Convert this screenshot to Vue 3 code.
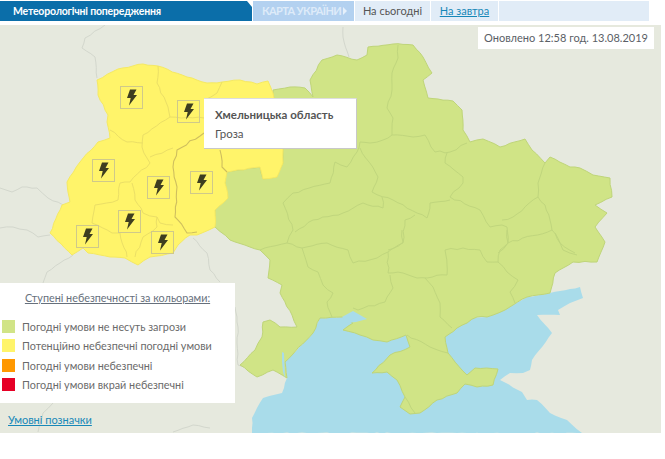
<script setup>
const bolts = [[120,86],[177,100],[92,159],[147,176],[190,171],[118,210],[76,225],[151,231]]
const legend = [
  { color: '#d1e487', label: 'Погодні умови не несуть загрози' },
  { color: '#fff46a', label: 'Потенційно небезпечні погодні умови' },
  { color: '#ff9800', label: 'Погодні умови небезпечні' },
  { color: '#e60026', label: 'Погодні умови вкрай небезпечні' },
]

// Adds small, repeatable wobble to long straight runs so that borders read as natural.
function rough(points, closed = false, amp = 1) {
  const pts = points.trim().split(/\s+/).map(p => p.split(',').map(Number))
  const out = []
  const count = closed ? pts.length : pts.length - 1
  for (let i = 0; i < count; i++) {
    const a = pts[i]
    const b = pts[(i + 1) % pts.length]
    out.push(a)
    const len = Math.hypot(b[0] - a[0], b[1] - a[1])
    const n = Math.floor(len / 5)
    for (let k = 1; k < n; k++) {
      const t = k / n
      const h = Math.sin((a[0] + k) * 12.9898 + (a[1] + k) * 78.233) * 43758.5453
      const r = (h - Math.floor(h) - 0.5) * 2 * amp
      const nx = -(b[1] - a[1]) / len
      const ny = (b[0] - a[0]) / len
      out.push([+(a[0] + (b[0] - a[0]) * t + nx * r).toFixed(1), +(a[1] + (b[1] - a[1]) * t + ny * r).toFixed(1)])
    }
  }
  if (!closed) out.push(pts[pts.length - 1])
  return out.map(p => p.join(',')).join(' ')
}

const sea = rough('252,433 252,418 263,398 282,393 287,378 285,362 313,333 320,318 342,317 360,310 440,320 487,317 513,305 527,297 550,293 580,287 583,298 570,303 558,310 560,315 537,315 552,333 532,360 530,370 523,373 510,373 500,380 522,392 527,400 537,400 550,413 567,420 582,433', true, 0.5)
const inlets = ['282,352 284,353 285,378 283,372 282,362', '342,317 353,311 367,319 356,322 346,323', '448,337 455,334 452,339 447,341']
const green = rough('228,198 225,183 227,172 260,167 263,179 277,177 283,163 283,150 273,90 290,87 305,88 313,97 310,80 322,60 337,55 357,60 367,55 368,47 393,44 413,45 423,57 432,73 423,80 428,98 453,101 462,110 463,130 470,142 483,139 500,147 525,139 532,150 545,163 550,157 570,167 580,168 593,175 610,178 612,197 595,205 607,213 595,227 605,242 597,262 573,262 555,273 550,293 527,297 513,305 505,310 487,317 477,317 457,328 445,337 448,353 467,375 475,368 498,369 493,385 477,387 465,384 457,393 437,400 420,413 410,414 400,407 405,397 397,380 387,372 372,373 390,355 410,347 406,335 387,342 373,340 360,335 343,330 353,323 342,317 320,318 313,333 285,362 287,378 273,370 257,377 240,365 255,350 262,337 263,322 270,320 280,327 297,327 292,315 280,293 282,285 268,278 270,260 260,250 230,240 215,227 215,210', true, 0.6)
const yellow = rough('97,80 118,69 143,64 158,66 187,77 207,83 222,82 240,80 257,84 268,81 273,93 283,150 283,163 277,177 263,179 260,167 227,172 225,183 228,198 215,210 215,227 197,235 190,235 178,245 173,253 150,257 138,265 125,258 110,257 88,253 83,248 72,255 50,233 62,205 70,202 67,182 80,162 98,142 110,138 107,122 108,115 98,95', true, 0.6)
const greenLines = [
  '398,45 398,58 392,73 392,90 387,108 393,118 392,135 383,140 370,143 360,142 357,152 347,167 335,162 330,183 293,193 283,203 293,230 287,243',
  '392,135 413,137 425,135 435,152 450,152 467,143',
  '447,153 445,163 463,177 463,183 450,197 480,210 490,227 502,225 507,227 508,243 498,253',
  '545,163 538,183 538,197 513,217 502,220',
  '538,197 545,205 550,220 552,230 560,243 575,253',
  '360,148 378,177 372,192 393,200 427,218 430,203 450,200',
  '382,197 383,208 363,203 343,213 313,220 295,232',
  '415,215 405,220 403,243 388,250',
  '260,250 287,243 302,248 327,243 348,250 353,263 377,258 388,252 403,242 402,230',
  '302,248 308,267 318,272 323,285 333,293 327,302 332,317',
  '390,275 393,288 385,302 358,310 353,308',
  '388,252 388,273 403,273 417,278 447,275 445,250 463,248 480,250 487,262 498,262 500,250 508,243 507,230',
  '425,278 433,287 440,303 440,317 452,328',
  '498,262 507,272 518,280 510,292 515,303',
  '555,233 563,250 577,255',
  '508,243 552,230',
  '407,335 430,347 448,353',
  '405,397 415,413',
].map(l => rough(l))
const yellowLines = [
  '158,66 157,83 168,107 170,117 143,135 142,147 150,163 130,182 120,183 118,200 95,205 92,223 112,233 120,233 127,257',
  '110,130 127,142 143,143',
  '150,157 173,148',
  '132,183 135,200 143,213 157,217 160,223 173,225',
  '157,217 157,227 143,237 135,257',
  '170,117 204,118',
  '222,82 217,93 204,100',
].map(l => rough(l))
const highlightLines = [
  '204,133 177,150 173,167 177,187 175,217 187,233 197,232',
  '220,150 222,167 227,172',
].map(l => rough(l))
const bgLines = [
  '105,25 85,38 82,48 95,57 97,78',
  '343,27 343,37 349,57',
  '0,188 12,192 22,187 37,188 48,198 63,205',
  '0,228 13,227 27,230 38,237 50,235',
  '73,255 60,263 47,272 43,283',
  '193,238 207,253 210,270 220,282',
  '235,307 238,327 237,343 238,365 244,367',
  '173,432 193,425 210,428',
  '53,403 43,413 38,432',
].map(l => rough(l, false, 0.6))
</script>

<template>
  <div class="page">
    <nav class="tabs">
      <div class="tab-main">Метеорологічні попередження</div>
      <div class="tab-map">КАРТА УКРАЇНИ<span class="arrow"></span></div>
      <div class="tab-day">На сьогодні</div>
      <a class="tab-day tab-link">На завтра</a>
      <div class="tab-fill"></div>
    </nav>
    <section class="map">
      <svg class="map-svg" viewBox="0 25 661 408" width="661" height="408">
        <polygon :points="sea" fill="#a9dcea" />
        <polyline v-for="l in bgLines" :key="l" :points="l" class="bg-line" />
        <polygon :points="green" fill="#d0e486" stroke="#bfd579" stroke-width="1" stroke-linejoin="round" />
        <polyline v-for="l in greenLines" :key="l" :points="l" class="green-line" />
        <polygon v-for="l in inlets" :key="l" :points="l" fill="#a9dcea" />
        <polygon :points="yellow" fill="#fff46a" stroke="#f5e963" stroke-width="1" stroke-linejoin="round" />
        <polyline v-for="l in yellowLines" :key="l" :points="l" class="yellow-line" />
        <polyline v-for="l in highlightLines" :key="l" :points="l" class="highlight-line" />
        <g v-for="b in bolts" :key="b.join()" :transform="`translate(${b[0]} ${b[1]})`">
          <rect x="0.5" y="0.5" width="22" height="22" fill="none" stroke="#cfc98a" />
          <path d="M10 3.5h6.5l-3 5.5h3.5L9 19.5l1.7-7.5H7z" fill="#3e3e20" />
        </g>
      </svg>
      <div class="updated">Оновлено 12:58 год. 13.08.2019</div>
      <div class="tooltip">
        <div class="tooltip-title">Хмельницька область</div>
        <div class="tooltip-text">Гроза</div>
      </div>
      <div class="legend">
        <div class="legend-title">Ступені небезпечності за кольорами:</div>
        <ul class="legend-list">
          <li v-for="i in legend" :key="i.label" class="legend-row">
            <span class="swatch" :style="{ background: i.color }"></span>{{ i.label }}
          </li>
        </ul>
      </div>
      <a class="legend-link">Умовні позначки</a>
    </section>
  </div>
</template>

<style scoped>
.page {
  width: 665px;
  height: 459px;
  background: #fff;
  font-family: "Lato", "Open Sans", "Noto Sans", sans-serif;
  overflow: hidden;
}
.tabs {
  display: flex;
  gap: 1px;
  height: 20px;
  padding-top: 1px;
  width: 649px;
  padding-bottom: 4px;
  font-size: 11px;
  line-height: 20px;
}
.tab-main {
  width: 252px;
  flex: none;
  background: #0b6ea9;
  color: #fff;
  font-size: 10.5px;
  letter-spacing: -0.2px;
  font-weight: 700;
  padding-left: 13px;
  box-sizing: border-box;
  clip-path: polygon(0 0, 247px 0, 252px 6px, 100% 100%, 0 100%);
}
.tab-map {
  width: 101px;
  flex: none;
  background: #b3d1f0;
  color: #deebf9;
  font-weight: 700;
  letter-spacing: -0.6px;
  padding-left: 9px;
  box-sizing: border-box;
  display: flex;
  align-items: center;
  gap: 2px;
  white-space: nowrap;
}
.arrow {
  width: 0;
  height: 0;
  border-left: 4px solid #e5f0fb;
  border-top: 4px solid transparent;
  border-bottom: 4px solid transparent;
}
.tab-day {
  width: 75px;
  flex: none;
  background: #e1ecf7;
  color: #555;
  text-align: center;
}
.tab-link {
  width: 67px;
  color: #1788b8;
  text-decoration: underline;
}
.tab-fill {
  flex: 1;
  background: #e1ecf7;
}
.map {
  position: relative;
  width: 661px;
  height: 408px;
  background: #e6e9de;
}
.map-svg {
  display: block;
}
.bg-line {
  fill: none;
  stroke: #d3d7cd;
  stroke-width: 1;
}
.green-line {
  fill: none;
  stroke: #c0d67d;
  stroke-width: 1;
  stroke-linejoin: round;
}
.yellow-line {
  fill: none;
  stroke: #ebdf66;
  stroke-width: 1;
  stroke-linejoin: round;
}
.highlight-line {
  fill: none;
  stroke: #cfbf5e;
  stroke-width: 1.1;
  stroke-linejoin: round;
}
.updated {
  position: absolute;
  left: 478px;
  top: 2px;
  width: 176px;
  height: 22px;
  background: #fff;
  color: #5a6066;
  font-size: 11px;
  line-height: 22px;
  text-align: center;
  white-space: nowrap;
}
.tooltip {
  position: absolute;
  left: 204px;
  top: 73px;
  width: 153px;
  height: 51px;
  box-sizing: border-box;
  background: #fff;
  border-right: 1px solid #c8c8c8;
  border-bottom: 1px solid #c8c8c8;
  border-top: 1px solid #ddd;
  padding: 8px 0 0 11px;
  color: #555;
  font-size: 11.5px;
}
.tooltip-title {
  font-weight: 700;
  line-height: 16px;
}
.tooltip-text {
  margin-top: 3px;
  line-height: 16px;
}
.legend {
  position: absolute;
  left: 0;
  top: 258px;
  width: 235px;
  height: 120px;
  background: #fff;
  color: #6a6a6a;
  font-size: 10.8px;
}
.legend-title {
  margin-top: 7px;
  text-align: center;
  text-decoration: underline;
  line-height: 16px;
  color: #66707c;
}
.legend-list {
  list-style: none;
  margin: 11px 0 0;
  padding: 0;
}
.legend-row {
  display: flex;
  align-items: center;
  height: 19.3px;
  gap: 7px;
  padding-left: 2px;
  white-space: nowrap;
}
.swatch {
  width: 13px;
  height: 13px;
  flex: none;
}
.legend-link {
  position: absolute;
  left: 8px;
  top: 387px;
  color: #1788b8;
  font-size: 11px;
  line-height: 16px;
  text-decoration: underline;
}
</style>
